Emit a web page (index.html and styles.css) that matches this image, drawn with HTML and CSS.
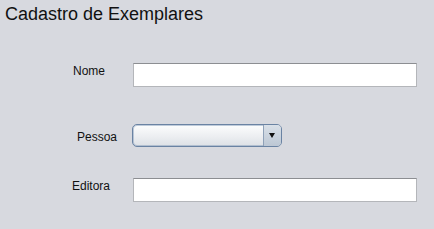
FILE: index.html
```html
<!DOCTYPE html>
<html lang="pt-BR">
<head>
    <meta charset="UTF-8">
    <title>Cadastro de Exemplares</title>
    <link rel="stylesheet" href="styles.css">
</head>
<body>
    <h1 class="window-title">Cadastro de Exemplares</h1>

    <form class="form">
        <!-- nome -->
        <div class="row row-nome">
            <label class="field-label label-nome" for="nome">Nome</label>
            <input class="text-field" type="text" id="nome">
        </div>

        <!-- pessoa -->
        <div class="row row-pessoa">
            <label class="field-label label-pessoa">Pessoa</label>
            <div class="combo">
                <span class="combo-value"></span>
                <span class="combo-btn"><span class="arrow"></span></span>
            </div>
        </div>

        <!-- editora -->
        <div class="row row-editora">
            <label class="field-label label-editora" for="editora">Editora</label>
            <input class="text-field" type="text" id="editora">
        </div>
    </form>
</body>
</html>
```

FILE: styles.css
```css
* {
    margin: 0;
    padding: 0;
    box-sizing: border-box;
    font-family: 'Liberation Sans', Arial, sans-serif;
}

body {
    background-color: #d7d9df;
    color: #111;
    width: 434px;
    height: 229px;
    overflow: hidden;
}

.window-title {
    font-size: 18px;
    font-weight: normal;
    line-height: 21px;
    padding: 4px 0 0 5px;
}

.form {
    margin-top: 38px;
}

.row {
    display: flex;
    align-items: flex-start;
}

.row-pessoa {
    margin-top: 37px;
}

.row-editora {
    margin-top: 31px;
}

.field-label {
    width: 133px;
    font-size: 12px;
    line-height: 14px;
}

.label-nome {
    padding: 1px 0 0 73px;
}

.label-pessoa {
    padding: 6px 0 0 77px;
}

.label-editora {
    padding: 1px 0 0 72px;
}

.text-field {
    width: 284px;
    height: 24px;
    background: #fff;
    border: 1px solid #b4b6ba;
    border-top-color: #8c8e92;
    outline: none;
}

/* combobox */
.combo {
    width: 150px;
    height: 23px;
    margin-left: -1px;
    display: flex;
    border: 1px solid #6a83a3;
    border-radius: 5px;
    box-shadow: inset 0 0 0 1px rgba(140, 162, 190, 0.55);
    background: linear-gradient(#fcfdfd, #eceef1 55%, #dde1e6);
    overflow: hidden;
}

.combo-value {
    flex: 1;
}

.combo-btn {
    width: 18px;
    display: flex;
    align-items: center;
    justify-content: center;
    border-left: 1px solid #8fa1b8;
    background: linear-gradient(#d9e0e8, #bcc7d4);
}

.arrow {
    width: 0;
    height: 0;
    margin-left: -1px;
    border-left: 3.5px solid transparent;
    border-right: 3.5px solid transparent;
    border-top: 5px solid #111;
}
```
